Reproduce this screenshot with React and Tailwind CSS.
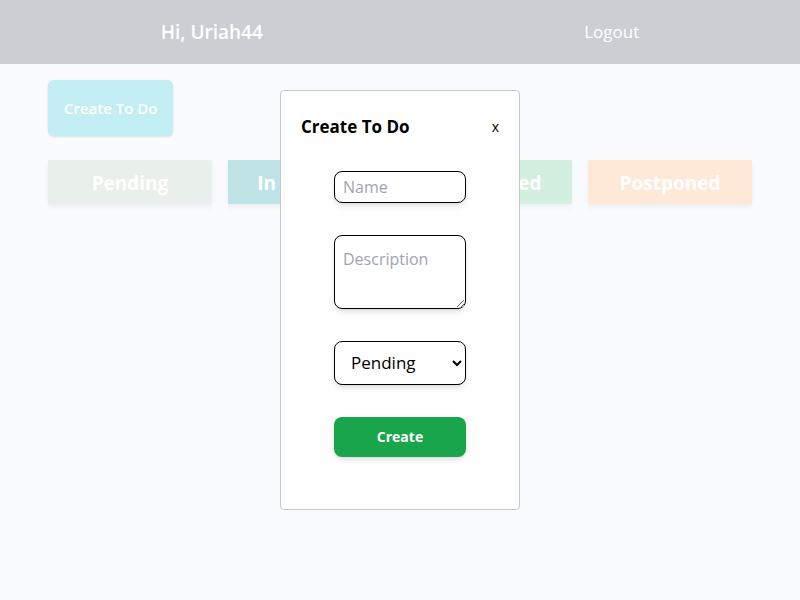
import { useState } from "react";

const columns = [
  { title: "Pending", bg: "bg-[#e9efea]" },
  { title: "In Progress", bg: "bg-[#c0e3e8]" },
  { title: "Completed", bg: "bg-[#d3efe0]" },
  { title: "Postponed", bg: "bg-[#fee9d9]" },
];

export default function App() {
  const [status, setStatus] = useState("Pending");

  return (
    <div className="relative min-h-[600px] bg-[#fafbfd] font-['Open_Sans',sans-serif]">
      {/* top bar */}
      <header className="flex h-16 items-center justify-around bg-[#cbced3] text-white">
        <span className="text-[19px] font-semibold">Hi, Uriah44</span>
        <button className="text-[17px]">Logout</button>
      </header>

      <main className="px-12 pt-4">
        <button className="h-14 rounded-md bg-[#c3eef4] px-4 text-[15px] font-semibold text-white shadow-sm">
          Create To Do
        </button>

        <div className="mt-6 grid grid-cols-4 gap-4">
          {columns.map((col) => (
            <div
              key={col.title}
              className={`flex h-11 items-center justify-center pt-0.5 text-[19px] font-bold text-white shadow-md shadow-gray-200/60 ${col.bg}`}
            >
              {col.title}
            </div>
          ))}
        </div>
      </main>

      {/* modal */}
      <div className="absolute left-[280px] top-[90px] flex h-[420px] w-[240px] flex-col rounded border border-[#c8c8c8] bg-white">
        <div className="flex items-center justify-between px-5 pt-[23px]">
          <h2 className="text-[17px] font-bold text-black">Create To Do</h2>
          <button className="text-sm text-black">x</button>
        </div>

        <form className="mt-[31px] flex flex-col items-center">
          <input
            placeholder="Name"
            className="h-8 w-[132px] rounded-lg border border-black px-2 text-base shadow-md outline-none placeholder:text-[#a0a4b0]"
          />
          <textarea
            placeholder="Description"
            className="mt-8 h-[74px] w-[132px] rounded-lg border border-black px-2 pt-[11px] text-base shadow-md outline-none placeholder:text-[#a0a4b0]"
          />
          <select
            value={status}
            onChange={(e) => setStatus(e.target.value)}
            className="mt-8 h-11 w-[132px] rounded-lg border border-black bg-white pl-3 text-[17px] text-black shadow-md outline-none"
          >
            <option>Pending</option>
            <option>In Progress</option>
            <option>Completed</option>
            <option>Postponed</option>
          </select>
          <button
            type="button"
            className="mt-8 h-10 w-[132px] rounded-lg bg-[#18a54b] text-sm font-bold text-white shadow-md"
          >
            Create
          </button>
        </form>
      </div>
    </div>
  );
}
